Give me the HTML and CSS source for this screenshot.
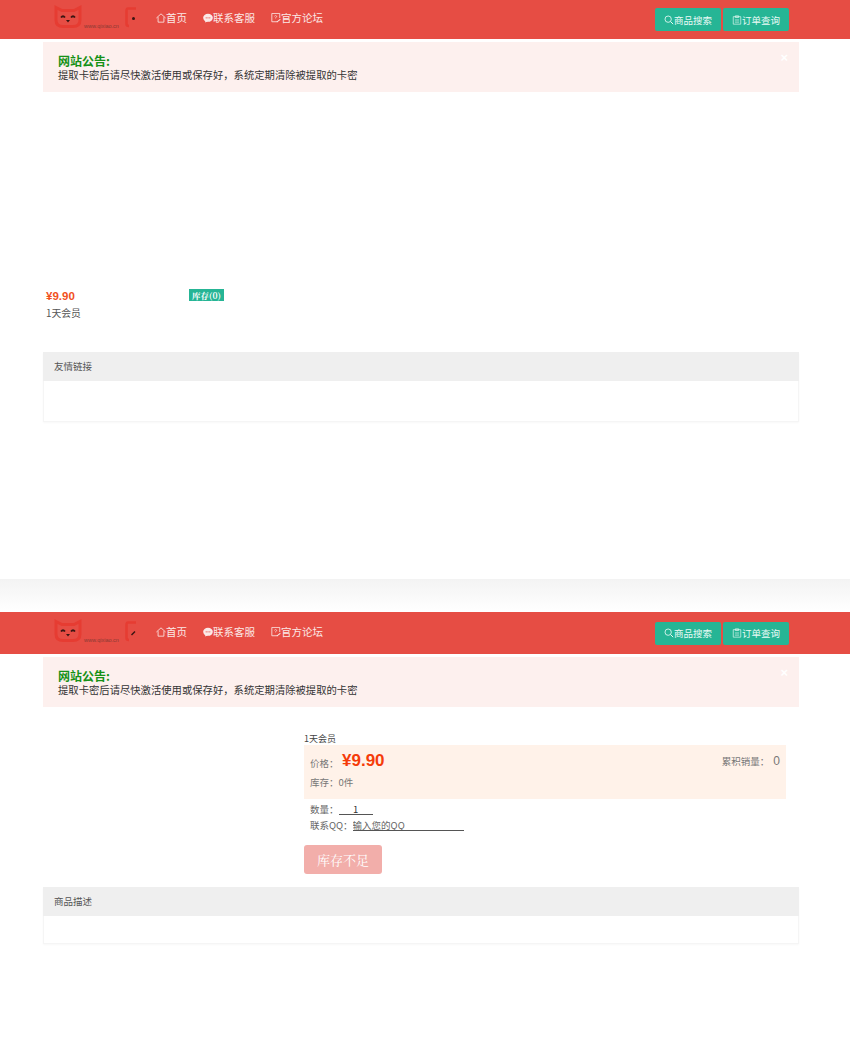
FILE: index.html
```html
<!DOCTYPE html>
<html lang="zh-CN">
<head>
<meta charset="utf-8">
<title>商品</title>
<link rel="stylesheet" href="styles.css">
</head>
<body>
<section class="screen screen-list">
  <header class="topbar">
    <div class="logo">
      <svg class="logo-art" width="84" height="24" viewBox="0 0 84 24" aria-hidden="true">
        <path d="M2 2.500 L8 5.500 H20 L26 2.500 V15 Q26 21.500 19 21.500 H9 Q2 21.500 2 15 Z" fill="none" stroke="#e63c32" stroke-width="3"/>
        <path d="M7 12.500 q2 -2.500 4 0 M17 12.500 q2 -2.500 4 0" fill="none" stroke="#3a1512" stroke-width="1.800"/>
        <path d="M12 15 h4 l-2 2.500 z" fill="#3a1512"/>
        <path d="M82 3.500 H74 Q72.500 3.500 72.500 6 V19 Q72.500 21 75 21" fill="none" stroke="#e63c32" stroke-width="2.600"/>
        <circle cx="79.500" cy="13.500" r="1.500" fill="#3a1512"/>
      </svg>
      <span class="logo-url">www.qixiao.cn</span>
    </div>
    <nav class="nav">
      <a class="nav-item"><svg class="ic" viewBox="0 0 12 12"><path d="M.5 6 L6 1 L11.500 6 M2.500 5 V11 H9.500 V5" fill="none" stroke="currentColor"/></svg>首页</a>
      <a class="nav-item"><svg class="ic" viewBox="0 0 12 12"><ellipse cx="6" cy="5.800" rx="5.800" ry="4.800" fill="currentColor"/><path d="M3 9 L2.500 11.500 L6 10 Z" fill="currentColor"/><circle cx="3.800" cy="5.800" r=".7" fill="#e64d44"/><circle cx="6" cy="5.800" r=".7" fill="#e64d44"/><circle cx="8.200" cy="5.800" r=".7" fill="#e64d44"/></svg>联系客服</a>
      <a class="nav-item"><svg class="ic" viewBox="0 0 12 12"><path d="M8 10.500 H1 V.5 H10.500 V6" fill="none" stroke="currentColor"/><path d="M4 4 Q5.500 2 7 4 Q7 5 5.500 5.500 V6.500" fill="none" stroke="currentColor" stroke-width=".8"/><path d="M6.500 10.500 L11 7 L11.500 8 L7.500 11 Z" fill="currentColor"/></svg>官方论坛</a>
    </nav>
    <div class="actions">
      <a class="btn"><svg class="ic" viewBox="0 0 12 12"><circle cx="5" cy="5" r="3.800" fill="none" stroke="currentColor"/><path d="M8 8 L11 11" stroke="currentColor" stroke-width="1.200"/></svg>商品搜索</a>
      <a class="btn"><svg class="ic" viewBox="0 0 12 12"><path d="M1.500 2 H10.500 V11 H1.500 Z M4 1 H8 V3 H4 Z M3.500 6 H8.500 M3.500 8.500 H8.500" fill="none" stroke="currentColor" stroke-width=".8"/></svg>订单查询</a>
    </div>
  </header>
  <main class="page">
    <div class="notice">
      <span class="notice-close">×</span>
      <h4 class="notice-title">网站公告:</h4>
      <p class="notice-text">提取卡密后请尽快激活使用或保存好，系统定期清除被提取的卡密</p>
    </div>
    <article class="goods">
      <div class="goods-row">
        <strong class="goods-price">¥9.90</strong>
        <span class="badge">库存(0)</span>
      </div>
      <p class="goods-name">1天会员</p>
    </article>
    <section class="panel panel-links">
      <h5 class="panel-head">友情链接</h5>
      <div class="panel-body"></div>
    </section>
  </main>
</section>

<div class="fold"></div>

<section class="screen screen-detail">
  <header class="topbar topbar-tall">
    <div class="logo">
      <svg class="logo-art" width="84" height="24" viewBox="0 0 84 24" aria-hidden="true">
        <path d="M2 2.500 L8 5.500 H20 L26 2.500 V15 Q26 21.500 19 21.500 H9 Q2 21.500 2 15 Z" fill="none" stroke="#e63c32" stroke-width="3"/>
        <path d="M7 12.500 q2 -2.500 4 0 M17 12.500 q2 -2.500 4 0" fill="none" stroke="#3a1512" stroke-width="1.800"/>
        <path d="M12 15 h4 l-2 2.500 z" fill="#3a1512"/>
        <path d="M82 3.500 H74 Q72.500 3.500 72.500 6 V19 Q72.500 21 75 21" fill="none" stroke="#e63c32" stroke-width="2.600"/>
        <path d="M77.500 16 L81 12.500" stroke="#3a1512" stroke-width="1.500"/>
      </svg>
      <span class="logo-url">www.qixiao.cn</span>
    </div>
    <nav class="nav">
      <a class="nav-item"><svg class="ic" viewBox="0 0 12 12"><path d="M.5 6 L6 1 L11.500 6 M2.500 5 V11 H9.500 V5" fill="none" stroke="currentColor"/></svg>首页</a>
      <a class="nav-item"><svg class="ic" viewBox="0 0 12 12"><ellipse cx="6" cy="5.800" rx="5.800" ry="4.800" fill="currentColor"/><path d="M3 9 L2.500 11.500 L6 10 Z" fill="currentColor"/><circle cx="3.800" cy="5.800" r=".7" fill="#e64d44"/><circle cx="6" cy="5.800" r=".7" fill="#e64d44"/><circle cx="8.200" cy="5.800" r=".7" fill="#e64d44"/></svg>联系客服</a>
      <a class="nav-item"><svg class="ic" viewBox="0 0 12 12"><path d="M8 10.500 H1 V.5 H10.500 V6" fill="none" stroke="currentColor"/><path d="M4 4 Q5.500 2 7 4 Q7 5 5.500 5.500 V6.500" fill="none" stroke="currentColor" stroke-width=".8"/><path d="M6.500 10.500 L11 7 L11.500 8 L7.500 11 Z" fill="currentColor"/></svg>官方论坛</a>
    </nav>
    <div class="actions">
      <a class="btn"><svg class="ic" viewBox="0 0 12 12"><circle cx="5" cy="5" r="3.800" fill="none" stroke="currentColor"/><path d="M8 8 L11 11" stroke="currentColor" stroke-width="1.200"/></svg>商品搜索</a>
      <a class="btn"><svg class="ic" viewBox="0 0 12 12"><path d="M1.500 2 H10.500 V11 H1.500 Z M4 1 H8 V3 H4 Z M3.500 6 H8.500 M3.500 8.500 H8.500" fill="none" stroke="currentColor" stroke-width=".8"/></svg>订单查询</a>
    </div>
  </header>
  <main class="page">
    <div class="notice">
      <span class="notice-close">×</span>
      <h4 class="notice-title">网站公告:</h4>
      <p class="notice-text">提取卡密后请尽快激活使用或保存好，系统定期清除被提取的卡密</p>
    </div>
    <div class="detail">
      <div class="detail-image"></div>
      <div class="detail-info">
        <h3 class="detail-name">1天会员</h3>
        <div class="pricebox">
          <div class="pricebox-row">
            <span class="label label-price">价格：</span>
            <strong class="big-price">¥9.90</strong>
            <span class="sales">累积销量：<b class="sales-num">0</b></span>
          </div>
          <div class="stock">库存：0件</div>
        </div>
        <div class="form-row form-row-first">
          <label class="label">数量：</label>
          <input class="field field-qty" value="1">
        </div>
        <div class="form-row">
          <label class="label">联系QQ：</label>
          <input class="field field-qq" placeholder="输入您的QQ">
        </div>
        <button class="buy" disabled>库存不足</button>
      </div>
    </div>
    <section class="panel panel-desc">
      <h5 class="panel-head">商品描述</h5>
      <div class="panel-body"></div>
    </section>
  </main>
</section>
</body>
</html>
```

FILE: styles.css
```css
* { box-sizing: border-box; }
html, body { margin: 0; padding: 0; background: #fff; }
body {
  font-family: "Noto Sans CJK SC", "Liberation Sans", sans-serif;
  font-size: 9.800px;
  color: #555;
  overflow: hidden;
}
h3, h4, h5, p { margin: 0; font-weight: normal; }

.screen-list { height: 579px; }
.screen-detail { height: 441px; }
.fold {
  height: 33px;
  background: linear-gradient(#f3f3f3, #fff);
}

.topbar {
  display: flex;
  align-items: center;
  height: 39px;
  padding: 0 61px 0 54px;
  background: #e64d44;
  color: #fbe9e7;
}
.topbar-tall { height: 42px; }

.logo { position: relative; width: 84px; height: 24px; margin-bottom: 5px; flex: none; }
.logo-art { display: block; }
.logo-url {
  position: absolute;
  left: 30px;
  bottom: 0;
  font: 5.500px/6px "Liberation Sans", sans-serif;
  color: #8a3a34;
  white-space: nowrap;
}

.nav { display: flex; gap: 16px; margin-left: 18px; padding-bottom: 4px; }
.topbar-tall .nav { padding-bottom: 2px; }
.nav-item { display: flex; align-items: center; font-size: 10.500px; line-height: 14px; }
.ic { width: 10px; height: 10px; flex: none; }

.actions { display: flex; gap: 2px; margin-left: auto; }
.btn {
  display: flex;
  align-items: center;
  justify-content: center;
  width: 66px;
  height: 23px;
  background: #26b595;
  border-radius: 2px;
  color: #eafaf5;
  font-size: 9.500px;
}

.page { width: 756px; margin-left: 43px; }

.notice {
  position: relative;
  height: 50px;
  margin-top: 3px;
  padding: 11px 15px 0;
  background: #fdf0ee;
  color: #333;
}
.notice-close {
  position: absolute;
  top: 8px;
  right: 11px;
  font: bold 13px/16px "Liberation Sans", sans-serif;
  color: #fff;
}
.notice-title { font-size: 12px; line-height: 15px; font-weight: bold; color: #169116; }
.notice-text { font-size: 10.340px; line-height: 14px; color: #333; }

.goods { margin-top: 197px; padding-left: 3px; }
.goods-row { display: flex; align-items: center; height: 14px; }
.goods-price {
  width: 143px;
  font: bold 11.500px/14px "Liberation Sans", sans-serif;
  color: #f1501c;
}
.badge {
  width: 35px;
  height: 12px;
  margin-bottom: 2px;
  background: #26b595;
  color: #fff;
  font: bold 8.500px/12px "Noto Serif CJK SC", serif;
  text-align: center;
}
.goods-name { margin-top: 3px; line-height: 14px; color: #555; }

.panel {
  border: 1px solid #f5f5f5;
  box-shadow: 0 1px 2px rgba(0, 0, 0, .03);
}
.panel-links { height: 70px; margin-top: 32px; }
.panel-desc { height: 57px; margin-top: 13px; }
.panel-head {
  height: 29px;
  margin: -1px -1px 0;
  padding-left: 11px;
  background: #efefef;
  font-size: 9.500px;
  line-height: 29px;
  color: #555;
}

.detail { display: flex; margin-top: 25px; }
.detail-image { width: 261px; flex: none; }
.detail-info { width: 482px; }
.detail-name { height: 13px; font-size: 9px; line-height: 14px; color: #444; }

.pricebox { height: 54px; padding: 3px 6px 0; background: #fff2e9; color: #777; }
.pricebox-row { display: flex; align-items: center; height: 26px; }
.label { font-size: 9.500px; color: #666; }
.label-price { width: 32px; padding-top: 3px; color: #777; }
.big-price { font: bold 17px/22px "Liberation Sans", sans-serif; color: #f53c0a; }
.sales { margin-left: auto; display: flex; align-items: center; font-size: 9.500px; color: #777; }
.sales-num { margin-left: 4px; font: normal 12px/14px "Liberation Sans", sans-serif; }
.stock { margin-top: 1px; font-size: 9.500px; line-height: 14px; }

.form-row { display: flex; align-items: center; height: 16px; padding-left: 6px; }
.form-row-first { margin-top: 2px; }
.field {
  border: 0;
  border-bottom: 1px solid #555;
  outline: 0;
  padding: 0;
  height: 12px;
  background: transparent;
  font: 9.500px/11px "Noto Sans CJK SC", "Liberation Sans", sans-serif;
  color: #333;
}
.field::placeholder { color: #666; opacity: 1; }
.field-qty { width: 34px; text-align: center; }
.field-qq { width: 111px; }

.buy {
  display: block;
  width: 78px;
  height: 29px;
  margin-top: 12px;
  border: 0;
  border-radius: 3px;
  padding: 0;
  background: #f2aeaa;
  color: #fff;
  font: 13px/29px "Noto Serif CJK SC", serif;
}
```
